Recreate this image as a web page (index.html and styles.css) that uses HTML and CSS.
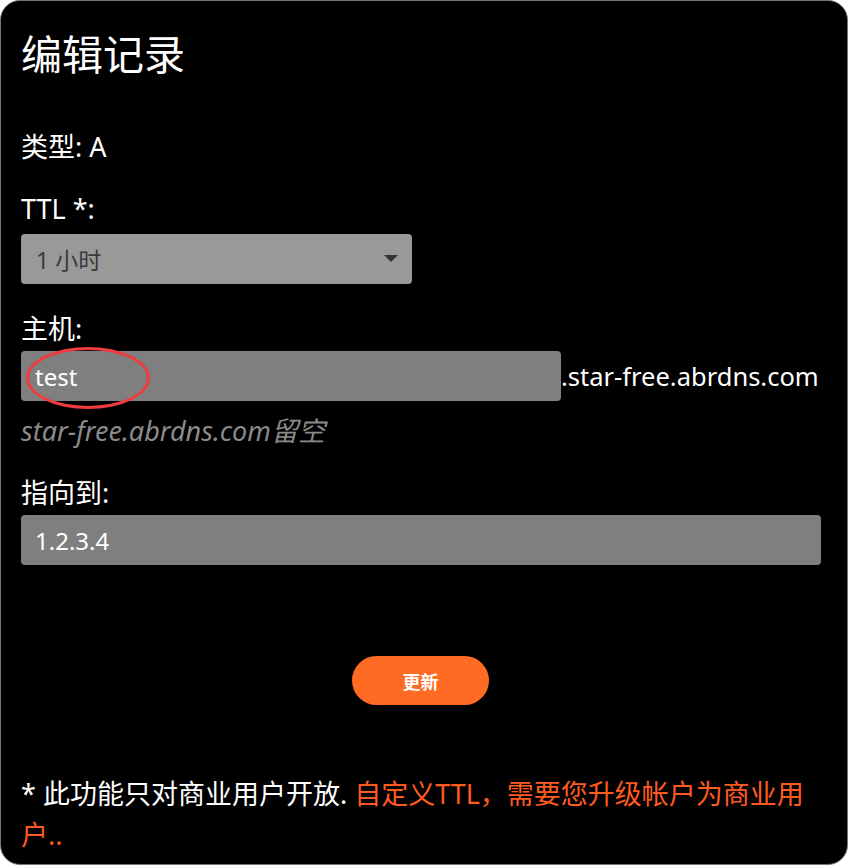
FILE: index.html
```html
<!DOCTYPE html>
<html lang="zh-CN">
<head>
<meta charset="utf-8">
<title>编辑记录</title>
<link rel="stylesheet" href="styles.css">
</head>
<body>
<div class="card">
  <h1 class="title">编辑记录</h1>
  <div class="type-row">类型: A</div>
  <div class="field field-ttl">
    <label class="label">TTL *:</label>
    <div class="select">
      <span>1 小时</span>
      <svg class="caret" width="14" height="8" viewBox="0 0 14 8"><path d="M0 0H14L7 7Z" fill="#333"/></svg>
    </div>
  </div>
  <div class="field field-host">
    <label class="label">主机:</label>
    <div class="host-row">
      <div class="input input-host">test</div>
      <span class="suffix">.star-free.abrdns.com</span>
      <span class="circle"></span>
    </div>
    <div class="hint">star-free.abrdns.com留空</div>
  </div>
  <div class="field field-target">
    <label class="label">指向到:</label>
    <div class="input input-full">1.2.3.4</div>
  </div>
  <div class="actions">
    <button class="btn">更新</button>
  </div>
  <p class="note">* 此功能只对商业用户开放. <span class="accent">自定义TTL，需要您升级帐户为商业用户..</span></p>
</div>
</body>
</html>
```
FILE: styles.css
```css
html, body {
  margin: 0;
  background: #fff;
}
body {
  font-family: "Noto Sans", "Noto Sans CJK SC", sans-serif;
  color: #fff;
}
.card {
  box-sizing: border-box;
  width: 848px;
  height: 865px;
  background: #000;
  border: 1px solid #777;
  border-radius: 20px;
  padding: 25px 27px 0 20px;
  overflow: hidden;
}
.title {
  margin: 0;
  font-size: 41px;
  font-weight: normal;
  line-height: 56px;
}
.type-row {
  margin-top: 49px;
  font-size: 27px;
  line-height: 32px;
}
.field {
  display: flex;
  flex-direction: column;
}
.label {
  font-size: 27px;
  line-height: 32px;
}
.field-ttl { margin-top: 30px; }
.field-ttl .label { margin-bottom: 9px; }
.select {
  box-sizing: border-box;
  width: 391px;
  height: 50px;
  background: #999;
  border-radius: 4px;
  color: #3a3a3a;
  font-size: 23px;
  padding: 0 14px 0 15px;
  display: flex;
  align-items: center;
  justify-content: space-between;
}
.field-host { margin-top: 29px; }
.field-host .label { margin-bottom: 6px; }
.host-row {
  position: relative;
  display: flex;
  align-items: center;
  white-space: nowrap;
}
.input {
  box-sizing: border-box;
  height: 50px;
  background: #7f7f7f;
  border-radius: 4px;
  color: #fff;
  font-size: 24px;
  padding: 0 14px;
  display: flex;
  align-items: center;
  flex-shrink: 0;
}
.input-host { width: 540px; }
.input-full { width: 800px; }
.suffix {
  font-size: 25.5px;
  white-space: nowrap;
}
.circle {
  position: absolute;
  left: 5px;
  top: -4px;
  width: 124px;
  height: 62px;
  border: 3.5px solid #f03c3c;
  border-radius: 50%;
  box-sizing: border-box;
}
.hint {
  margin-top: 14px;
  font-size: 27px;
  line-height: 32px;
  font-style: italic;
  color: #8a8a8a;
}
.field-target { margin-top: 30px; }
.field-target .label { margin-bottom: 6px; }
.actions {
  display: flex;
  justify-content: center;
  margin-top: 91px;
}
.btn {
  width: 137px;
  height: 49px;
  border: none;
  border-radius: 25px;
  background: #ff6b22;
  color: #fff;
  font-family: inherit;
  font-size: 18px;
  font-weight: bold;
}
.note {
  margin: 68px 0 0;
  font-size: 27px;
  line-height: 41px;
}
.accent { color: #ff5b1f; }
```
